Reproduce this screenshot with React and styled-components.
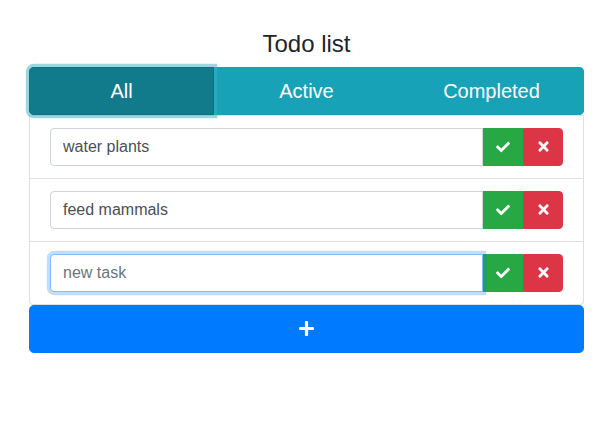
import React from "react";
import styled, { createGlobalStyle } from "styled-components";
import { FaCheck, FaTimes, FaPlus } from "react-icons/fa";

const Global = createGlobalStyle`
  html, body { margin: 0; padding: 0; background: #fff; }
  body { font-family: "Liberation Sans", Arial, sans-serif; color: #212529; }
  * { box-sizing: border-box; }
`;

const Page = styled.div`
  padding: 30px 30px 0 29px;
  display: flex;
  flex-direction: column;
`;

const Title = styled.h1`
  margin: 0 0 8px;
  font-size: 24px;
  font-weight: 400;
  line-height: 1.2;
  text-align: center;
  color: #212529;
`;

const Tabs = styled.div`
  display: flex;
  border-radius: 4.8px;
  background: #17a2b8;
`;

const Tab = styled.button`
  flex: 1;
  height: 48px;
  border: 1px solid ${(p) => (p.$active ? "#10707f" : "#17a2b8")};
  background: ${(p) => (p.$active ? "#117a8b" : "#17a2b8")};
  color: #fff;
  font-family: inherit;
  font-size: 20px;
  line-height: 1.5;
  padding: 8px 16px;
  position: relative;
  z-index: ${(p) => (p.$active ? 1 : 0)};
  box-shadow: ${(p) => (p.$active ? "0 0 0 3.2px rgba(58,176,195,.5)" : "none")};
  border-radius: ${(p) =>
    p.$first ? "4.8px 0 0 4.8px" : p.$last ? "0 4.8px 4.8px 0" : "0"};
  cursor: pointer;
`;

const List = styled.ul`
  list-style: none;
  margin: 0;
  padding: 0;
  display: flex;
  flex-direction: column;
`;

const Item = styled.li`
  padding: 12px 20px;
  border: 1px solid rgba(0, 0, 0, 0.125);
  border-top: none;
  &:first-child {
    border-top: 1px solid rgba(0, 0, 0, 0.125);
  }
  &:last-child {
    border-bottom-left-radius: 4px;
    border-bottom-right-radius: 4px;
  }
`;

const InputGroup = styled.div`
  display: flex;
  height: 38px;
`;

const TaskInput = styled.input`
  flex: 1;
  min-width: 0;
  height: 38px;
  padding: 6px 12px;
  font-family: inherit;
  font-size: 16px;
  line-height: 1.5;
  color: #495057;
  background: #fff;
  border: 1px solid ${(p) => (p.$focus ? "#80bdff" : "#ced4da")};
  border-radius: 4px 0 0 4px;
  outline: none;
  position: relative;
  z-index: ${(p) => (p.$focus ? 3 : 0)};
  box-shadow: ${(p) => (p.$focus ? "0 0 0 3.2px rgba(0,123,255,.25)" : "none")};
  &::placeholder { color: #6c757d; opacity: 1; }
`;

const IconButton = styled.button`
  width: 40px;
  height: 38px;
  display: flex;
  align-items: center;
  justify-content: center;
  border: 1px solid ${(p) => p.$color};
  background: ${(p) => p.$color};
  color: #fff;
  padding: 0;
  border-radius: ${(p) => (p.$last ? "0 4px 4px 0" : "0")};
  cursor: pointer;
`;

const AddButton = styled.button`
  height: 48px;
  width: 100%;
  display: flex;
  align-items: center;
  justify-content: center;
  background: #007bff;
  border: 1px solid #007bff;
  border-radius: 4.8px;
  color: #fff;
  cursor: pointer;
`;

const todos = [
  { text: "water plants" },
  { text: "feed mammals" },
  { text: "", placeholder: "new task", focus: true },
];

export default function App() {
  return (
    <>
      <Global />
      <Page>
        <Title>Todo list</Title>
        <Tabs>
          <Tab $active $first>All</Tab>
          <Tab>Active</Tab>
          <Tab $last>Completed</Tab>
        </Tabs>
        <List>
          {todos.map((t, i) => (
            <Item key={i}>
              <InputGroup>
                <TaskInput
                  defaultValue={t.text}
                  placeholder={t.placeholder}
                  $focus={t.focus}
                />
                <IconButton $color="#28a745">
                  <FaCheck size={14} />
                </IconButton>
                <IconButton $color="#dc3545" $last>
                  <FaTimes size={15} />
                </IconButton>
              </InputGroup>
            </Item>
          ))}
        </List>
        <AddButton>
          <FaPlus size={17} />
        </AddButton>
      </Page>
    </>
  );
}
